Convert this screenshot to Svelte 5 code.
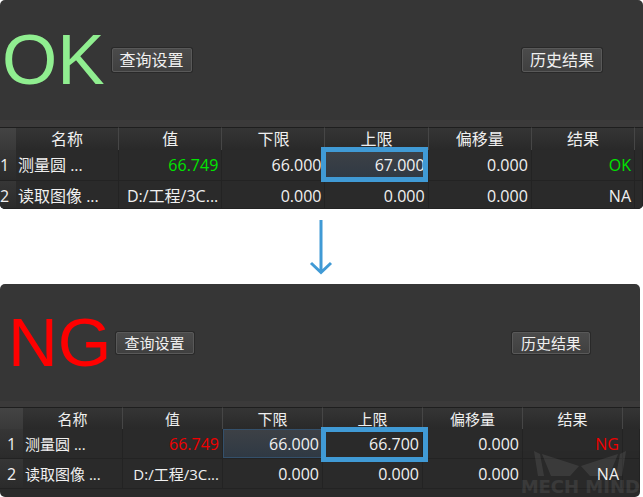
<script lang="ts">
  type Row = {
    name: string;
    cells: string[];
    result: string;
    selected?: number;
    marked?: number;
  };

  type Panel = {
    status: string;
    kind: string;
    rows: Row[];
  };

  const columns = ['名称', '值', '下限', '上限', '偏移量', '结果'];

  const panels: Panel[] = [
    {
      status: 'OK',
      kind: 'pass',
      rows: [
        { name: '测量圆 ...', cells: ['66.749', '66.000', '67.000', '0.000'], result: 'OK', selected: 2, marked: 2 },
        { name: '读取图像 ...', cells: ['D:/工程/3C...', '0.000', '0.000', '0.000'], result: 'NA' }
      ]
    },
    {
      status: 'NG',
      kind: 'fail',
      rows: [
        { name: '测量圆 ...', cells: ['66.749', '66.000', '66.700', '0.000'], result: 'NG', selected: 1, marked: 2 },
        { name: '读取图像 ...', cells: ['D:/工程/3C...', '0.000', '0.000', '0.000'], result: 'NA' }
      ]
    }
  ];
</script>

<main>
  {#each panels as panel, p}
    {#if p > 0}
      <div class="arrow">
        <svg width="24" height="56" viewBox="0 0 24 56" aria-hidden="true">
          <path d="M12 1V53M2 44L12 53.500L22 44" />
        </svg>
      </div>
    {/if}

    <section class="panel {panel.kind}">
      <header>
        <span class="status">{panel.status}</span>
        <button type="button">查询设置</button>
        <button type="button" class="history">历史结果</button>
      </header>

      <table>
        <colgroup>
          <col class="index-col" />
          {#each columns as column}
            <col />
          {/each}
          <col class="rest-col" />
        </colgroup>
        <thead>
          <tr>
            <td class="corner"></td>
            {#each columns as column}
              <th scope="col">{column}</th>
            {/each}
            <td></td>
          </tr>
        </thead>
        <tbody>
          {#each panel.rows as row, i}
            <tr>
              <th scope="row">{i + 1}</th>
              <td class="name">{row.name}</td>
              {#each row.cells as cell, c}
                <td
                  class:path={cell.includes('/')}
                  class:selected={row.selected === c}
                  class:marked={row.marked === c}
                  class:verdict={c === 0 && row.result !== 'NA'}
                >{cell}</td>
              {/each}
              <td class:verdict={row.result !== 'NA'}>{row.result}</td>
              <td></td>
            </tr>
          {/each}
        </tbody>
      </table>

      {#if panel.kind === 'fail'}
        <div class="watermark">
          <svg width="94" height="26" viewBox="0 0 94 26" aria-hidden="true">
            <path d="M1 0L7 3L11 25H5ZM9 3L46 15L37 25H18ZM93 0L87 3L83 25H89ZM85 3L48 15L57 25H76Z" />
          </svg>
          <span>MECH MIND</span>
        </div>
      {/if}
    </section>
  {/each}
</main>

<style>
  :global(body) {
    margin: 0;
    background: #fff;
  }

  main {
    font-family: 'Open Sans', 'Noto Sans CJK SC', sans-serif;
    color: #f0f0f0;
  }

  .panel {
    position: relative;
    overflow: hidden;
    border-radius: 5px;
    background: #363636;
    font-size: 16px;
    --accent: #00e400;
  }

  .fail {
    margin-right: 3px;
    padding-bottom: 8px;
    background: linear-gradient(#363636 120px, #2a2a2a 120px);
    --accent: #f00000;
  }

  header {
    display: flex;
    align-items: center;
    gap: 7px;
    height: 120px;
    padding: 0 41px 0 2px;
  }

  .fail header {
    gap: 4px;
    height: 117px;
    padding: 0 50px 0 8px;
  }

  .status {
    font-family: 'Liberation Sans', sans-serif;
    font-size: 71px;
    line-height: 80px;
    color: #90ee90;
  }

  .fail .status {
    font-size: 69px;
    color: #ff0000;
  }

  button {
    height: 24px;
    padding: 0 7px;
    border: 1px solid #595959;
    border-radius: 2px;
    background: linear-gradient(#4b4b4b, #404040);
    box-shadow: 0 0 0 1px #292929;
    font-family: inherit;
    font-size: 16px;
    line-height: 20px;
    color: #f0f0f0;
  }

  .fail button {
    height: 22px;
    padding: 0 8px;
    font-size: 15px;
    line-height: 18px;
  }

  .history {
    margin-left: auto;
  }

  table {
    width: 100%;
    table-layout: fixed;
    border-collapse: separate;
    border-spacing: 0;
    border-top: 7px solid #3b3a3a;
    background: #2a2a2a;
  }

  .fail table {
    border-top-width: 6px;
  }

  .index-col {
    width: 16px;
  }

  .rest-col {
    width: 8px;
  }

  .fail .index-col {
    width: 23px;
  }

  .fail .rest-col {
    width: 17px;
  }

  th,
  td {
    box-sizing: border-box;
    padding: 0;
    font-weight: 400;
    line-height: 20px;
    white-space: nowrap;
  }

  thead th,
  thead td {
    height: 23px;
    border-top: 1px solid #1e1e1e;
    border-right: 1px solid #464646;
    background: linear-gradient(#353535, #292929);
  }

  .fail thead th,
  .fail thead td {
    height: 22px;
  }

  thead td:last-child {
    border-right: 0;
  }

  thead .corner {
    border-right: 0;
    background: linear-gradient(#444, #393939);
  }

  tbody th {
    border-bottom: 1px solid #222;
    background: linear-gradient(#363636, #2b2b2b);
    text-align: left;
  }

  .fail tbody th {
    text-align: center;
  }

  tbody td {
    position: relative;
    height: 31px;
    padding-right: 3px;
    border-right: 1px solid #232323;
    border-bottom: 1px solid #232323;
    text-align: right;
  }

  .pass tbody tr:last-child > * {
    height: 28px;
    padding-top: 2px;
  }

  .fail tbody td {
    height: 30px;
  }

  tbody td.name {
    padding-left: 2px;
    text-align: left;
  }

  .fail thead th,
  .fail .name,
  .fail .path {
    font-size: 15px;
  }

  .selected {
    background: linear-gradient(#3d4146, #2f3944);
  }

  .fail .selected {
    box-shadow: inset 0 0 0 1px #34506b;
  }

  .verdict {
    color: var(--accent);
  }

  /* callout frame around the upper limit */
  .marked::after {
    content: '';
    position: absolute;
    z-index: 1;
    inset: -3px 0 -2px -4px;
    border: 5px solid #409ad5;
  }

  .fail .marked::after {
    inset: -2px -6px -4px -2px;
  }

  .arrow {
    display: flex;
    justify-content: center;
    align-items: center;
    height: 75px;
    padding-right: 2px;
  }

  .arrow path {
    fill: none;
    stroke: #409ad5;
    stroke-width: 3;
  }

  .watermark {
    position: absolute;
    right: 0;
    bottom: 0;
    display: flex;
    flex-direction: column;
    align-items: center;
    opacity: 0.08;
    font-family: 'DejaVu Sans', sans-serif;
    font-size: 18px;
    font-weight: 700;
    line-height: 20px;
    color: #fff;
  }

  .watermark path {
    fill: #fff;
  }
</style>
